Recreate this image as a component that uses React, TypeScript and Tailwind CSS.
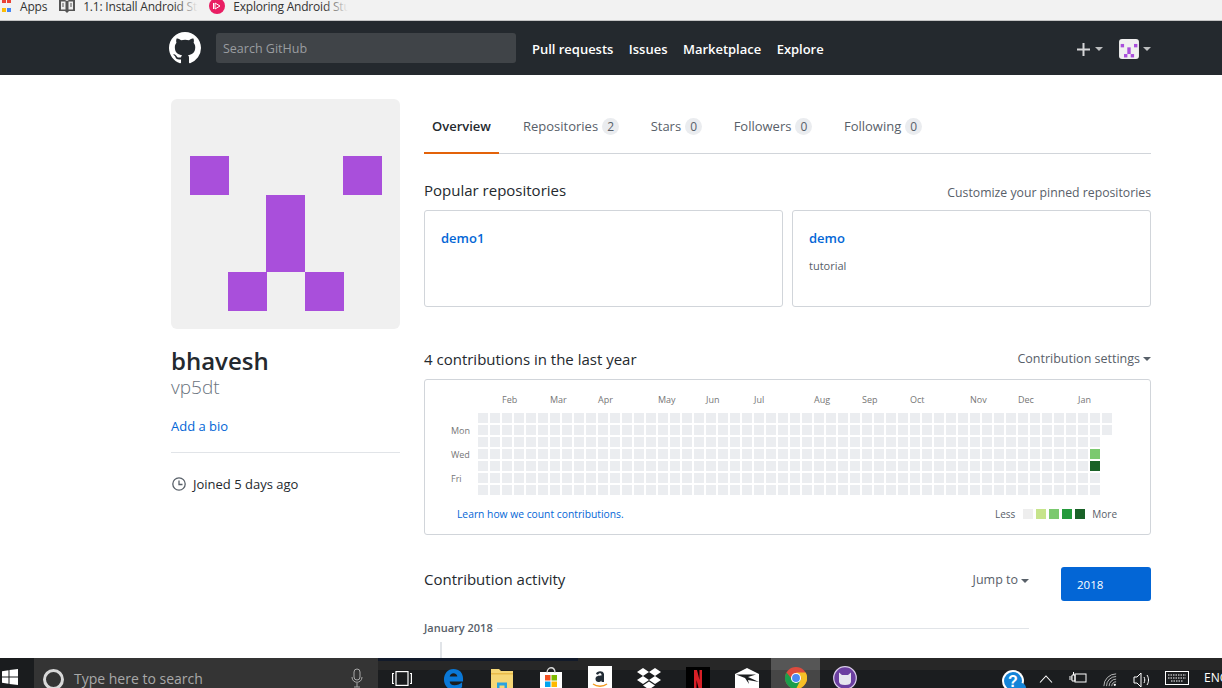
import React from 'react';

const font = { fontFamily: '"Open Sans", "Noto Sans", sans-serif' };

const tabs = [
  { name: 'Repositories', count: 2 },
  { name: 'Stars', count: 0 },
  { name: 'Followers', count: 0 },
  { name: 'Following', count: 0 },
];

// month label -> week column it starts at
const months: [string, number][] = [
  ['Feb', 2], ['Mar', 6], ['Apr', 10], ['May', 15], ['Jun', 19], ['Jul', 23],
  ['Aug', 28], ['Sep', 32], ['Oct', 36], ['Nov', 41], ['Dec', 45], ['Jan', 50],
];

const cellColor = (week: number, day: number) => {
  if (week === 51 && day === 3) return '#7bc96f';
  if (week === 51 && day === 4) return '#196127';
  return '#ebedf0';
};

const Caret = ({ color = 'border-t-[#586069]' }: { color?: string }) => (
  <span className={`inline-block w-0 h-0 border-x-[4px] border-x-transparent border-t-[4px] ${color}`} />
);

const GithubMark = () => (
  <svg viewBox="0 0 16 16" className="w-8 h-8" fill="#fff">
    <path d="M8 0C3.58 0 0 3.58 0 8c0 3.54 2.29 6.53 5.47 7.59.4.07.55-.17.55-.38 0-.19-.01-.82-.01-1.49-2.01.37-2.53-.49-2.69-.94-.09-.23-.48-.94-.82-1.13-.28-.15-.68-.52-.01-.53.63-.01 1.08.58 1.23.82.72 1.21 1.87.87 2.33.66.07-.52.28-.87.51-1.07-1.78-.2-3.64-.89-3.64-3.95 0-.87.31-1.59.82-2.15-.08-.2-.36-1.02.08-2.12 0 0 .67-.21 2.2.82.64-.18 1.32-.27 2-.27s1.36.09 2 .27c1.53-1.04 2.2-.82 2.2-.82.44 1.1.16 1.92.08 2.12.51.56.82 1.27.82 2.15 0 3.07-1.87 3.75-3.65 3.95.29.25.54.73.54 1.48 0 1.07-.01 1.93-.01 2.2 0 .21.15.46.55.38A8.01 8.01 0 0 0 16 8c0-4.42-3.58-8-8-8z" />
  </svg>
);

const Identicon = ({ className }: { className: string }) => (
  <svg viewBox="0 0 229 230" className={className}>
    <rect width="229" height="230" fill="#f0f0f0" />
    <g fill="#a94fdb">
      <rect x="19" y="57" width="39" height="39" />
      <rect x="172" y="57" width="39" height="39" />
      <rect x="95" y="96" width="39" height="77" />
      <rect x="57" y="173" width="39" height="39" />
      <rect x="134" y="173" width="39" height="39" />
    </g>
  </svg>
);

const TaskSlot = ({ children, active }: { children: React.ReactNode; active?: boolean }) => (
  <div
    className={`w-[49px] h-full flex justify-center pt-[11px] overflow-hidden ${
      active ? 'bg-[linear-gradient(#565656_12px,#464646_12px)]' : ''
    }`}
  >
    {children}
  </div>
);

const TaskIcons = () => (
  <div className="flex h-full w-[490px] ml-[1px]">
    <TaskSlot>
      <svg width="20" height="15" viewBox="0 0 20 15" fill="none" stroke="#fff" strokeWidth="1.2" className="mt-[2px] -ml-[3px]">
        <rect x="4" y="0.6" width="12" height="13.800" />
        <path d="M2 2.500H0.6v10H2M18 2.500h1.400v10H18" />
      </svg>
    </TaskSlot>
    <TaskSlot>
      <svg width="21" height="22" viewBox="0 0 22 23" className="-mt-[1px] ml-[2px]">
        <path d="M11 1C5 1 1 6 1 12c0 6 4 11 10 11 4 0 7-1 9-3v-5c-2 2-5 3-8 3-3 0-5-2-5-4h14v-3C21 5 17 1 11 1zM7 9c.3-2 2-3.500 4-3.500S15 7 15 9H7z" fill="#0a78d7" />
      </svg>
    </TaskSlot>
    <TaskSlot>
      <svg width="22" height="20" viewBox="0 0 22 20">
        <path d="M0 0h8l2 2h12v18H0z" fill="#f6d776" />
        <path d="M0 4h22v1.500H0z" fill="#e8bb4a" />
        <path d="M6 20v-6.500h10V20h-2.500v-3.500h-5V20z" fill="#2aa3e0" />
      </svg>
    </TaskSlot>
    <TaskSlot>
      <svg width="22" height="24" viewBox="0 0 22 24" className="-mt-[3px]">
        <rect x="0" y="6" width="22" height="18" fill="#fff" />
        <path d="M7 7c0-7 8-7 8 0" fill="none" stroke="#ddd" strokeWidth="1.300" />
        <rect x="5" y="9" width="5.500" height="5.500" fill="#f25022" />
        <rect x="11.500" y="9" width="5.500" height="5.500" fill="#7fba00" />
        <rect x="5" y="15.500" width="5.500" height="5.500" fill="#00a4ef" />
        <rect x="11.500" y="15.500" width="5.500" height="5.500" fill="#ffb900" />
      </svg>
    </TaskSlot>
    <TaskSlot>
      <svg width="24" height="25" viewBox="0 0 24 25" className="-mt-[3px]">
        <rect width="24" height="25" fill="#fff" />
        <path d="M8 8c.5-3 7-4 8 0v8h-2.500v-1.500c-2 2.500-6 2-6-1.500 0-3 3-3.500 6-3.500V8.500c-.5-2-3-1.500-3.500.3z" fill="#222c36" />
        <path d="M5 18c4 3 10 3 14 0" stroke="#f39a1f" strokeWidth="1.300" fill="none" />
      </svg>
    </TaskSlot>
    <TaskSlot>
      <svg width="24" height="22" viewBox="0 0 24 22" fill="#fff" className="-mt-[1px]">
        <path d="M6 0l6 4-6 4-6-4zM18 0l6 4-6 4-6-4zM0 12l6-4 6 4-6 4zM24 12l-6-4-6 4 6 4zM6 17.500l6-4 6 4-6 4z" />
      </svg>
    </TaskSlot>
    <TaskSlot>
      <svg width="24" height="26" viewBox="0 0 24 26" className="-mt-[2px]">
        <rect width="24" height="26" fill="#000" />
        <path d="M8 3h3l2.500 10V3H16v20h-3l-2.500-10v10H8z" fill="#d81f26" />
      </svg>
    </TaskSlot>
    <TaskSlot>
      <svg width="24" height="20" viewBox="0 0 24 20" className="-mt-[1px]">
        <path d="M12 0l12 6v14H0V6z" fill="#fff" />
        <path d="M1 6.500h20l-8 2.500 11 5-11-2 1 4-4-6z" fill="#1b1d1f" />
      </svg>
    </TaskSlot>
    <TaskSlot active>
      <svg width="22" height="22" viewBox="0 0 24 24" className="-mt-[2px]">
        <circle cx="12" cy="12" r="12" fill="#dd4b3e" />
        <path d="M12 12L1.600 18A12 12 0 0 0 12 24l6-9z" fill="#1b9e4b" />
        <path d="M1.600 6A12 12 0 0 0 1.600 18L12 24l-3-9z" fill="#1b9e4b" />
        <path d="M12 6h10.500A12 12 0 0 1 12 24l6-12z" fill="#f6c026" />
        <circle cx="12" cy="12" r="5.500" fill="#fff" />
        <circle cx="12" cy="12" r="4.300" fill="#4a8af4" />
      </svg>
    </TaskSlot>
    <TaskSlot>
      <svg width="24" height="24" viewBox="0 0 24 24" className="-mt-[3px]">
        <circle cx="12" cy="12" r="11.300" fill="#6b3fa0" stroke="#d9cbe8" strokeWidth="1.200" />
        <path d="M6 6.500l3 2.500h6l3-2.500v9c0 2.500-2 3.500-6 3.500s-6-1-6-3.500z" fill="#e6e6ee" />
      </svg>
    </TaskSlot>
  </div>
);

const Tray = () => (
  <div className="ml-auto h-full flex items-start text-white">
    <svg width="24" height="24" viewBox="0 0 24 24" className="mt-[11px] mr-[13px]">
      <circle cx="11" cy="12" r="11" fill="#fff" />
      <circle cx="11" cy="12" r="9" fill="#1484d8" />
      <text x="11" y="18" textAnchor="middle" fontSize="16" fontWeight="700" fill="#fff" fontFamily="Liberation Sans">?</text>
      <circle cx="19" cy="19" r="5" fill="#1484d8" />
    </svg>
    <svg width="14" height="8" viewBox="0 0 14 8" fill="none" stroke="#fff" strokeWidth="1.100" className="mt-[17px] mr-[16px]">
      <path d="M1 7.500L7 1l6 6.500" />
    </svg>
    <svg width="18" height="14" viewBox="0 0 18 14" fill="none" stroke="#fff" strokeWidth="1" className="mt-[13px] mr-[16px]">
      <rect x="6" y="3" width="11" height="8" />
      <path d="M0 6h3M0 8h3M3 4h3v6H3zM4.500 1v3" />
    </svg>
    <svg width="14" height="14" viewBox="0 0 16 16" fill="none" stroke="#ddd" strokeWidth="0.900" className="mt-[15px] mr-[16px]">
      <path d="M1 15A14 14 0 0 1 15 1M4 15A11 11 0 0 1 15 4M7 15a8 8 0 0 1 8-8M10 15a5 5 0 0 1 5-5" />
      <circle cx="13.500" cy="13.500" r="1.300" fill="#fff" stroke="none" />
    </svg>
    <svg width="17" height="16" viewBox="0 0 17 16" fill="none" stroke="#fff" strokeWidth="1" className="mt-[14px] mr-[15px]">
      <path d="M1 5h3l4-4v14l-4-4H1zM11 5c1 2 1 4 0 6M14 3c2 3 2 7 0 10" />
    </svg>
    <svg width="24" height="14" viewBox="0 0 24 14" fill="none" stroke="#fff" strokeWidth="1" className="mt-[13px] mr-[15px]">
      <rect x="0.500" y="0.500" width="23" height="13" />
      <path d="M3 4h18M3 7h18M6 10h12" strokeDasharray="1.500 1" />
    </svg>
    <span className="mt-[10px] w-[18px] overflow-hidden text-[12px] leading-[20px] text-white" style={font}>ENG</span>
  </div>
);

export default function App() {
  return (
    <div className="w-[1222px] h-[688px] overflow-hidden flex flex-col bg-white text-[#24292e]" style={font}>
      {/* bookmarks bar */}
      <div className="h-[21px] shrink-0 bg-[#f2f2f2] border-b border-b-[#c4c4c4] flex items-start text-[12px] leading-[14px] text-[#333] -tracking-[0.2px] overflow-hidden">
        <div className="ml-[2px] w-[9px] grid grid-cols-[4px_4px] gap-x-[1px] gap-y-[5px]">
          <span className="bg-[#ea4335] h-[3px]" />
          <span className="bg-[#ea4335] h-[3px]" />
          <span className="bg-[#fbbc05] h-[4px]" />
          <span className="bg-[#4285f4] h-[4px]" />
        </div>
        <span className="ml-[9px]">Apps</span>
        <svg width="16" height="13" viewBox="0 0 16 13" className="ml-[12px]">
          <path d="M0 0h6l2 1 2-1h6v11h-6l-2 2-2-2H0z" fill="#555" />
          <path d="M2 1.500h4.500v8H2zM9.500 1.500H14v8H9.500z" fill="#eee" />
          <path d="M4 3v4M12 3v4" stroke="#555" strokeWidth="1" />
        </svg>
        <span className="relative ml-[8px] w-[115px] whitespace-nowrap overflow-hidden">
          1.1: Install Android Studio
          <span className="absolute right-0 top-0 h-full w-[24px] bg-gradient-to-r from-transparent to-[#f2f2f2]" />
        </span>
        <svg width="16" height="14" viewBox="0 0 16 14" className="ml-[11px]">
          <circle cx="8" cy="6" r="8" fill="#e91e63" />
          <path d="M6 3l5 3-5 3z" fill="none" stroke="#fff" strokeWidth="1" />
          <path d="M4.500 3v6" stroke="#fff" strokeWidth="1" />
        </svg>
        <span className="relative ml-[8px] w-[115px] whitespace-nowrap overflow-hidden">
          Exploring Android Studio
          <span className="absolute right-0 top-0 h-full w-[24px] bg-gradient-to-r from-transparent to-[#f2f2f2]" />
        </span>
      </div>

      {/* github header */}
      <header className="h-[54px] shrink-0 bg-[#24292e] flex items-center pl-[169px] pr-[71px]">
        <GithubMark />
        <div className="ml-[15px] w-[300px] h-[30px] rounded-[3px] bg-[#404448] px-[7px] pt-[2px] flex items-center text-[12.5px] text-[#9a9da0]">
          Search GitHub
        </div>
        <nav className="ml-[16px] mt-[3px] flex gap-[15.5px] text-[13px] font-semibold text-white -tracking-[0.02px]">
          <span>Pull requests</span>
          <span>Issues</span>
          <span>Marketplace</span>
          <span>Explore</span>
        </nav>
        <div className="ml-auto flex items-center mt-[2px]">
          <svg width="13" height="13" viewBox="0 0 13 13" fill="#d5d6d7">
            <path d="M5.500 0h2v5.500H13v2H7.500V13h-2V7.500H0v-2h5.500z" />
          </svg>
          <span className="ml-[5px] flex"><Caret color="border-t-[#bcbebf]" /></span>
          <Identicon className="ml-[16px] w-[20px] h-[20px] rounded-[3px]" />
          <span className="ml-[4px] flex"><Caret color="border-t-[#bcbebf]" /></span>
        </div>
      </header>

      <div className="flex-1 min-h-0 overflow-hidden flex pl-[171px] pt-[24px]">
        {/* sidebar */}
        <aside className="w-[229px] shrink-0">
          <Identicon className="w-[229px] h-[230px] rounded-[6px]" />
          <h1 className="mt-[17px] text-[24px] leading-[29px] font-semibold">bhavesh</h1>
          <div className="text-[19px] leading-[24px] font-light text-[#6a737d]">vp5dt</div>
          <a className="block mt-[18px] text-[13px] leading-[18px] text-[#0366d6]">Add a bio</a>
          <div className="mt-[17px] pt-[22px] border-t border-t-[#e1e4e8] flex items-center text-[13px] leading-[18px]">
            <svg width="14" height="14" viewBox="0 0 14 14" fill="none" stroke="#586069" strokeWidth="1.300" className="ml-[1px]">
              <circle cx="7" cy="7" r="6.200" />
              <path d="M7 3.500V7.500H10.500" />
            </svg>
            <span className="ml-[7px]">Joined 5 days ago</span>
          </div>
        </aside>

        {/* main column */}
        <main className="ml-[24px] w-[727px] shrink-0">
          <div className="h-[55px] flex border-b border-b-[#d1d5da] text-[13px]">
            <div className="w-[75px] h-[55px] pt-[2px] flex items-center justify-center border-b-2 border-b-[#e36209] font-semibold text-[#24292e]">
              Overview
            </div>
            <div className="flex ml-[24px] gap-[31.5px] items-center h-[55px] text-[#586069]">
              {tabs.map((t) => (
                <span key={t.name} className="flex items-center gap-[4px]">
                  {t.name}
                  <span className="w-[17px] h-[17px] flex items-center justify-center rounded-full bg-[#eaecef] text-[12px] text-[#586069]">{t.count}</span>
                </span>
              ))}
            </div>
          </div>

          <div className="mt-[24px] flex items-end justify-between">
            <h2 className="text-[15px] leading-[24px]">Popular repositories</h2>
            <span className="text-[12.25px] leading-[20px] text-[#586069] translate-y-[1px]">Customize your pinned repositories</span>
          </div>
          <div className="mt-[8px] grid grid-cols-2 gap-[9px]">
            <div className="h-[97px] border border-[#d1d5da] rounded-[3px] pl-[16px] pt-[17px]">
              <a className="block text-[13px] leading-[20px] font-semibold text-[#0366d6]">demo1</a>
            </div>
            <div className="h-[97px] border border-[#d1d5da] rounded-[3px] pl-[16px] pt-[17px]">
              <a className="block text-[13px] leading-[20px] font-semibold text-[#0366d6]">demo</a>
              <p className="mt-[10px] text-[11px] leading-[16px] text-[#586069]">tutorial</p>
            </div>
          </div>

          <div className="mt-[40px] flex items-center justify-between">
            <h2 className="text-[15px] leading-[24px]">4 contributions in the last year</h2>
            <span className="flex items-center gap-[3px] text-[12.5px] text-[#586069]">Contribution settings <Caret /></span>
          </div>
          <div className="mt-[8px] h-[156px] border border-[#d1d5da] rounded-[3px] pt-[13px] relative">
            <div className="flex">
              <div className="w-[26px] ml-[26px] pt-[20px] shrink-0 text-[9px] text-[#767676]">
                <div className="h-[12px]" />
                <div className="h-[12px] leading-[12px]">Mon</div>
                <div className="h-[12px]" />
                <div className="h-[12px] leading-[12px]">Wed</div>
                <div className="h-[12px]" />
                <div className="h-[12px] leading-[12px]">Fri</div>
              </div>
              <div className="ml-[1px]">
                <div className="grid grid-cols-[repeat(53,12px)] h-[20px] text-[9px] leading-[14px] text-[#767676]">
                  {months.map(([m, col]) => (
                    <span key={m} style={{ gridColumnStart: col + 1 }} className="whitespace-nowrap">{m}</span>
                  ))}
                </div>
                <div className="flex gap-[2px]">
                  {Array.from({ length: 53 }, (_, week) => (
                    <div key={week} className="flex flex-col gap-[2px]">
                      {Array.from({ length: week === 52 ? 2 : 7 }, (_, day) => (
                        <span key={day} className="w-[10px] h-[10px]" style={{ backgroundColor: cellColor(week, day) }} />
                      ))}
                    </div>
                  ))}
                </div>
              </div>
            </div>
            <div className="mt-[11px] pl-[32px] pr-[33px] flex items-center justify-between text-[10.3px] leading-[16px]">
              <a className="text-[#0366d6]">Learn how we count contributions.</a>
              <span className="flex items-center text-[#586069] text-[10px]">
                Less
                <span className="ml-[8px] w-[10px] h-[10px] bg-[#eeeeee]" />
                <span className="ml-[3px] w-[10px] h-[10px] bg-[#c6e48b]" />
                <span className="ml-[3px] w-[10px] h-[10px] bg-[#7bc96f]" />
                <span className="ml-[3px] w-[10px] h-[10px] bg-[#239a3b]" />
                <span className="ml-[3px] w-[10px] h-[10px] bg-[#196127]" />
                <span className="ml-[7px]">More</span>
              </span>
            </div>
          </div>

          <div className="mt-[32px] flex items-start">
            <h2 className="text-[15px] leading-[25px]">Contribution activity</h2>
            <span className="ml-auto h-[27px] flex items-center gap-[3px] text-[12.5px] text-[#586069]">Jump to <Caret /></span>
            <span className="ml-[32px] w-[90px] h-[34px] rounded-[3px] bg-[#0366d6] text-white text-[11.5px] flex items-center pl-[16px] pt-[1px]">2018</span>
          </div>
          <div className="mt-[19px] w-[605px] flex items-center text-[11px] font-semibold text-[#586069]">
            January 2018
            <span className="ml-[4px] flex-1 h-px bg-[#e1e4e8]" />
          </div>
          <div className="ml-[16px] mt-[5px] w-[2px] h-[30px] bg-[#e1e4e8]" />
        </main>
      </div>

      {/* windows taskbar */}
      <footer className="h-[30px] shrink-0 bg-[linear-gradient(#272727_12px,#1b1d1f_12px)] flex items-stretch relative">
        <span className="absolute left-[378px] top-0 w-[200px] h-[3px] bg-[#121a2a]" />
        <div className="w-[34px] bg-[#1a1c1e] flex justify-start pl-[2px] pt-[11px] overflow-hidden">
          <svg width="16" height="16" viewBox="0 0 16 16" fill="#fff">
            <path d="M0 2.300L6.500 1.300V7.500H0zM7.500 1.100L16 0V7.500H7.500zM0 8.500H6.500V14.700L0 13.700zM7.500 8.500H16V16L7.500 14.900z" />
          </svg>
        </div>
        <div className="w-[344px] bg-[#343434] flex items-start overflow-hidden">
          <span className="ml-[9px] mt-[11px] w-[21px] h-[21px] rounded-full border-[3px] border-[#d8d8d8] shrink-0" />
          <span className="ml-[10px] mt-[10px] text-[14px] leading-[22px] text-[#a8a8a8] whitespace-nowrap">Type here to search</span>
          <svg width="12" height="20" viewBox="0 0 12 20" fill="none" stroke="#a8a8a8" strokeWidth="1" className="ml-auto mr-[15px] mt-[10px] shrink-0">
            <rect x="3" y="1" width="6" height="11" rx="3" />
            <path d="M1 9c0 7 10 7 10 0M6 15v4M3 19h6" />
          </svg>
        </div>
        <TaskIcons />
        <Tray />
      </footer>
    </div>
  );
}
